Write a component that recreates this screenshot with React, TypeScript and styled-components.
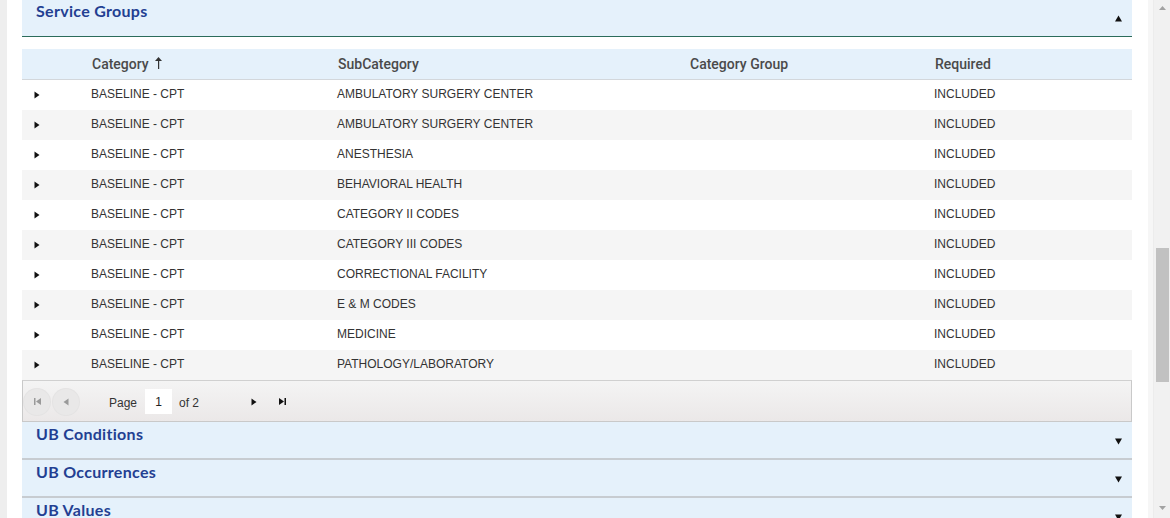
import React from "react";
import styled, { createGlobalStyle } from "styled-components";

const Global = createGlobalStyle`
  html, body { margin: 0; padding: 0; overflow: hidden; background: #fff; }
  body { font-family: "Liberation Sans", Arial, sans-serif; }
`;

const Page = styled.div`
  display: flex;
  width: 1170px;
  height: 518px;
  overflow: hidden;
`;

const Gutter = styled.div`
  width: 7px;
  flex: none;
  background: #eeeeee;
`;

const Main = styled.div`
  flex: 1;
  background: #ffffff;
  padding: 0 16px 0 15px;
  overflow: hidden;
`;

const Content = styled.div`
  margin-top: -1px;
  display: flex;
  flex-direction: column;
`;

const PanelHeader = styled.div<{ $open?: boolean }>`
  flex: none;
  box-sizing: border-box;
  height: 38px;
  background: #e5f1fb;
  border-bottom: ${(p) => (p.$open ? "1px solid #2b6c5b" : "2px solid #c7ccd1")};
  display: flex;
  align-items: flex-start;
  justify-content: space-between;
  padding: 2px 10px 0 14px;
`;

const PanelTitle = styled.span`
  font-family: Lato, "Open Sans", sans-serif;
  font-weight: 700;
  font-size: 16px;
  letter-spacing: 0.3px;
  line-height: 20px;
  color: #233f92;
`;

const Caret = styled.svg`
  margin-top: 14px;
  width: 7px;
  height: 7px;
  display: block;
`;

const PanelBody = styled.div`
  padding-top: 12px;
`;

const COLS = "61px 246px 352px 245px 1fr";

const HeadRow = styled.div`
  display: grid;
  grid-template-columns: ${COLS};
  height: 31px;
  box-sizing: border-box;
  background: #e5f1fb;
  border-bottom: 1px solid #d3d7db;
  align-items: center;
`;

const HeadCell = styled.div`
  padding-left: 9px;
  font-family: Roboto, "Liberation Sans", sans-serif;
  font-weight: 500;
  font-size: 14px;
  color: #4a4a4a;
  display: flex;
  align-items: center;
  gap: 6px;
`;

const Row = styled.div<{ $alt?: boolean }>`
  display: grid;
  grid-template-columns: ${COLS};
  height: 30px;
  box-sizing: border-box;
  padding-bottom: 2px;
  align-items: center;
  background: ${(p) => (p.$alt ? "#f5f5f5" : "#ffffff")};
`;

const Cell = styled.div`
  padding-left: 8px;
  font-size: 12px;
  line-height: 14px;
  color: #333333;
  white-space: nowrap;
`;

const ExpandCell = styled.div`
  display: flex;
  align-items: center;
  padding-left: 12px;
  padding-top: 2px;
`;

const Pager = styled.div`
  height: 42px;
  box-sizing: border-box;
  border: 1px solid #c9c9c9;
  border-top-color: #d0d0d0;
  background: linear-gradient(#f4f4f4, #ebe8e8);
  display: flex;
  align-items: center;
  padding-left: 1px;
  padding-top: 1px;
  font-size: 12px;
  color: #333;
`;

const PagerButton = styled.div<{ $disabled?: boolean }>`
  width: 26px;
  height: 26px;
  border-radius: 50%;
  margin-right: ${(p) => (p.$disabled ? "3px" : "2px")};
  background: ${(p) => (p.$disabled ? "#e9e8e8" : "transparent")};
  box-shadow: ${(p) => (p.$disabled ? "0 0 0 1px #e4e3e3" : "none")};
  display: flex;
  align-items: center;
  justify-content: center;
`;

const PageLabel = styled.span<{ $ml: number }>`
  margin-left: ${(p) => p.$ml}px;
  padding-top: 2px;
`;

const PageInput = styled.div`
  width: 27px;
  height: 25px;
  margin-left: 8px;
  background: #fff;
  display: flex;
  align-items: center;
  justify-content: center;
  font-size: 12px;
  color: #222;
`;

const NavGroup = styled.div`
  display: flex;
  margin-left: 42px;
`;

const Scrollbar = styled.div`
  width: 22px;
  flex: none;
  display: flex;
  background: #f1f1f1;
`;

const ScrollEdge = styled.div`
  width: 5px;
  background: #f6f6f6;
  border-right: 1px solid #ececec;
`;

const Track = styled.div`
  flex: 1;
  display: flex;
  flex-direction: column;
  align-items: center;
`;

const ScrollArrow = styled.svg<{ $mt: number }>`
  margin-top: ${(p) => p.$mt}px;
  width: 7px;
  height: 4px;
  display: block;
`;

const Thumb = styled.div`
  margin-top: 238px;
  width: 13px;
  height: 134px;
  background: #c1c1c1;
`;

const rows = [
  "AMBULATORY SURGERY CENTER",
  "AMBULATORY SURGERY CENTER",
  "ANESTHESIA",
  "BEHAVIORAL HEALTH",
  "CATEGORY II CODES",
  "CATEGORY III CODES",
  "CORRECTIONAL FACILITY",
  "E & M CODES",
  "MEDICINE",
  "PATHOLOGY/LABORATORY",
];

const Up = () => (
  <Caret viewBox="0 0 7 7">
    <polygon points="3.5,0.5 7,6.5 0,6.5" fill="#111" />
  </Caret>
);
const Down = () => (
  <Caret viewBox="0 0 7 7">
    <polygon points="0,0.5 7,0.5 3.5,6.5" fill="#111" />
  </Caret>
);

const RightTri = ({ color = "#111" }: { color?: string }) => (
  <svg width="6" height="8" viewBox="0 0 6 8" style={{ display: "block" }}>
    <polygon points="0.5,0.5 5.5,4 0.5,7.5" fill={color} />
  </svg>
);

const Panel = ({ title }: { title: string }) => (
  <PanelHeader>
    <PanelTitle>{title}</PanelTitle>
    <Down />
  </PanelHeader>
);

export default function App() {
  return (
    <Page>
      <Global />
      <Gutter />
      <Main>
        <Content>
          <PanelHeader $open>
            <PanelTitle>Service Groups</PanelTitle>
            <Up />
          </PanelHeader>
          <PanelBody>
            <HeadRow>
              <HeadCell />
              <HeadCell>
                Category
                <svg width="7" height="12" viewBox="0 0 7 12" style={{ display: "block", marginTop: -3 }}>
                  <polygon points="3.5,0 7,4 0,4" fill="#333" />
                  <rect x="3" y="3" width="1.2" height="9" fill="#333" />
                </svg>
              </HeadCell>
              <HeadCell>SubCategory</HeadCell>
              <HeadCell>Category Group</HeadCell>
              <HeadCell>Required</HeadCell>
            </HeadRow>
            {rows.map((sub, i) => (
              <Row key={i} $alt={i % 2 === 1}>
                <ExpandCell>
                  <RightTri />
                </ExpandCell>
                <Cell>BASELINE - CPT</Cell>
                <Cell>{sub}</Cell>
                <Cell />
                <Cell>INCLUDED</Cell>
              </Row>
            ))}
            <Pager>
              <PagerButton $disabled>
                <svg width="7" height="7" viewBox="0 0 7 7">
                  <rect x="0" y="0" width="1.5" height="7" fill="#9a9a9a" />
                  <polygon points="7,0 2,3.5 7,7" fill="#9a9a9a" />
                </svg>
              </PagerButton>
              <PagerButton $disabled>
                <svg width="6" height="8" viewBox="0 0 6 8">
                  <polygon points="5.5,0.5 0.5,4 5.5,7.5" fill="#9a9a9a" />
                </svg>
              </PagerButton>
              <PageLabel $ml={27}>Page</PageLabel>
              <PageInput>1</PageInput>
              <PageLabel $ml={7}>of 2</PageLabel>
              <NavGroup>
                <PagerButton>
                  <RightTri />
                </PagerButton>
                <PagerButton>
                  <svg width="7" height="7" viewBox="0 0 7 7">
                    <polygon points="0,0 5,3.5 0,7" fill="#111" />
                    <rect x="5.5" y="0" width="1.5" height="7" fill="#111" />
                  </svg>
                </PagerButton>
              </NavGroup>
            </Pager>
          </PanelBody>
          <Panel title="UB Conditions" />
          <Panel title="UB Occurrences" />
          <Panel title="UB Values" />
        </Content>
      </Main>
      <Scrollbar>
        <ScrollEdge />
        <Track>
          <ScrollArrow $mt={6} viewBox="0 0 7 4">
            <polygon points="3.5,0 7,4 0,4" fill="#a3a3a3" />
          </ScrollArrow>
          <Thumb />
          <ScrollArrow $mt={124} viewBox="0 0 7 4">
            <polygon points="0,0 7,0 3.5,4" fill="#a3a3a3" />
          </ScrollArrow>
        </Track>
      </Scrollbar>
    </Page>
  );
}
